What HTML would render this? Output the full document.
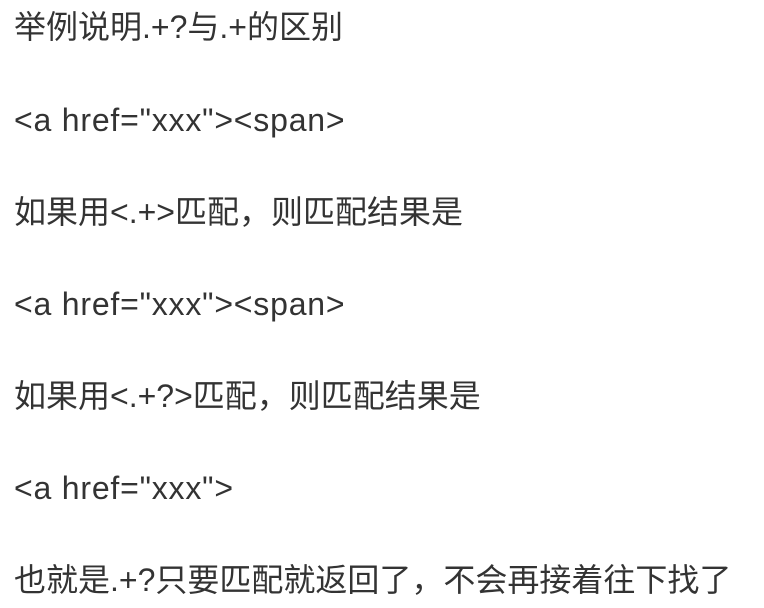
<!DOCTYPE html>
<html><head><meta charset="utf-8"><style>
html,body{margin:0;padding:0;background:#fff;width:764px;height:608px;overflow:hidden}
p{position:absolute;left:14px;margin:0;font-size:32px;line-height:30px;color:#333;white-space:nowrap;
font-family:"Liberation Sans","Noto Sans CJK SC",sans-serif}
.l{letter-spacing:0.8px}
</style></head><body>
<p style="top:12px">举例说明.+?与.+的区别</p>
<p class="l" style="top:105px">&lt;a href="xxx"&gt;&lt;span&gt;</p>
<p style="top:197px">如果用&lt;.+&gt;匹配，则匹配结果是</p>
<p class="l" style="top:289px">&lt;a href="xxx"&gt;&lt;span&gt;</p>
<p style="top:381px">如果用&lt;.+?&gt;匹配，则匹配结果是</p>
<p class="l" style="top:473px">&lt;a href="xxx"&gt;</p>
<p style="top:565px">也就是.+?只要匹配就返回了，不会再接着往下找了</p>
</body></html>
